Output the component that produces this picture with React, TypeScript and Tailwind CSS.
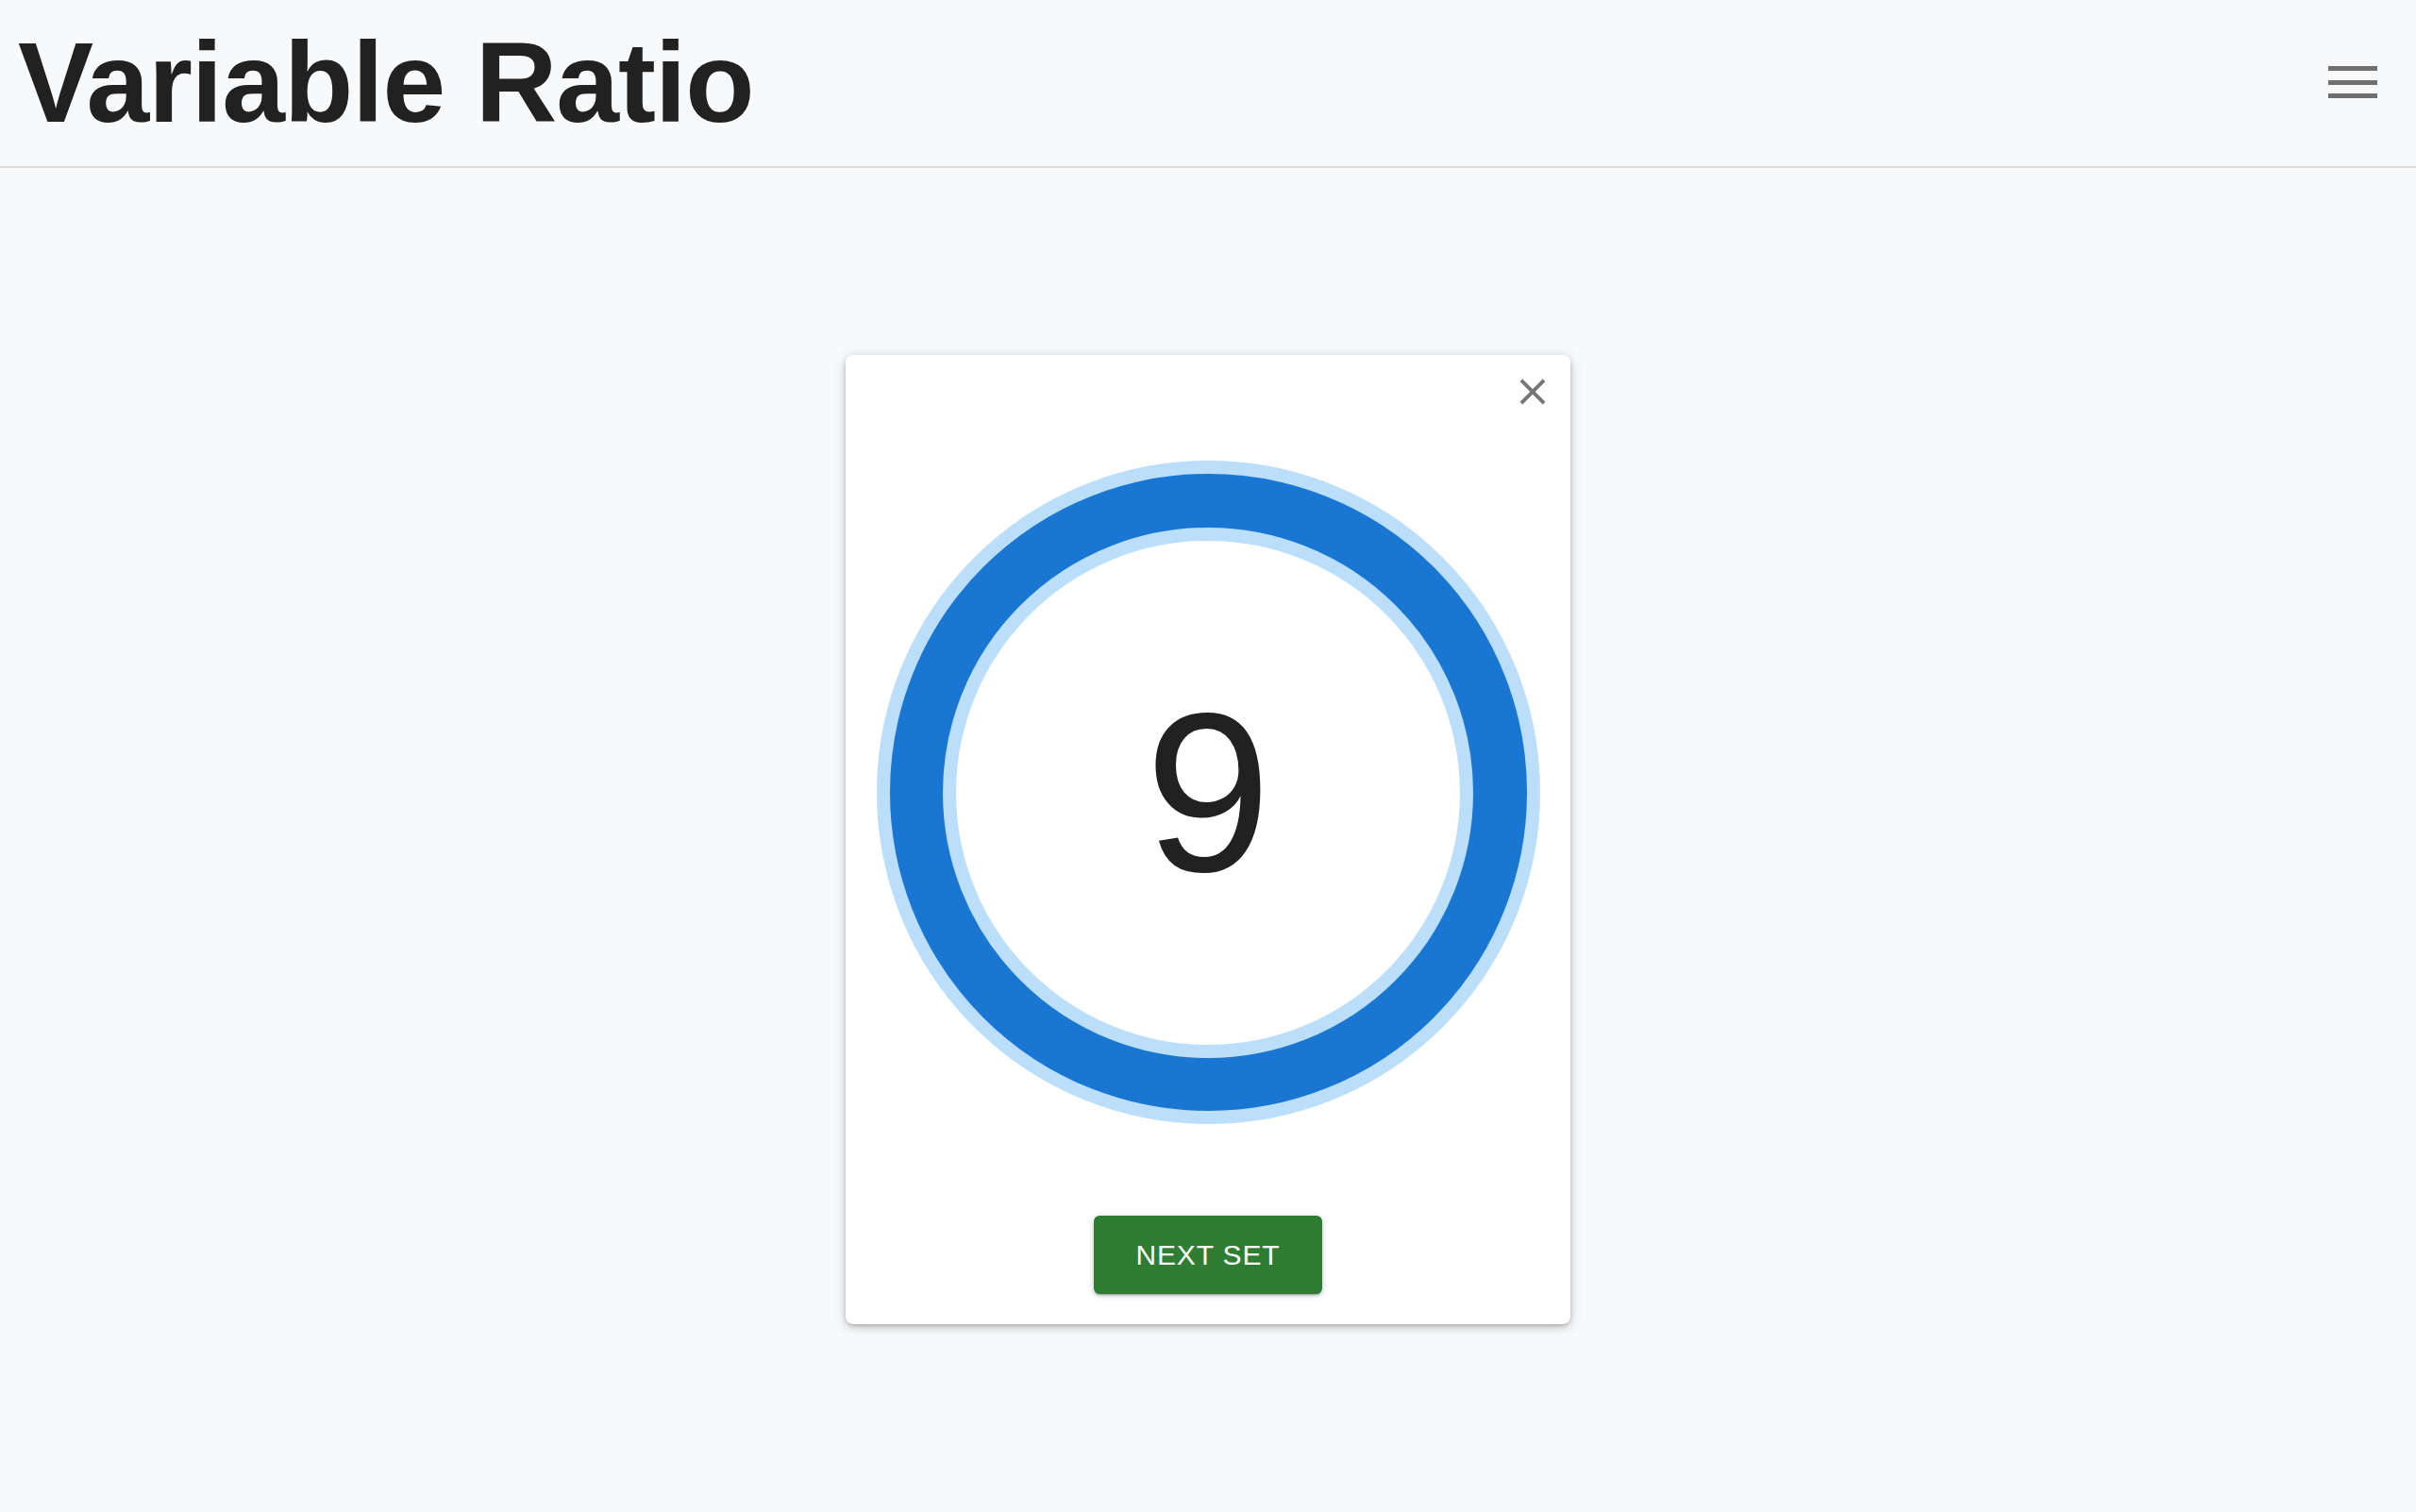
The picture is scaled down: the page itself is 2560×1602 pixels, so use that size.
import { useState } from "react";

function CloseIcon() {
  return (
    <svg viewBox="0 0 24 24" className="h-[46px] w-[46px]" fill="#757575">
      <path d="M19 6.41 17.59 5 12 10.59 6.41 5 5 6.41 10.59 12 5 17.59 6.41 19 12 13.41 17.59 19 19 17.59 13.41 12z" />
    </svg>
  );
}

function CountRing({ value }: { value: number }) {
  return (
    <div className="flex h-[703px] w-[703px] items-center justify-center rounded-full border-[14px] border-[#bbdefb] bg-[#1976d2]">
      <div className="flex h-[562px] w-[562px] items-center justify-center rounded-full border-[14px] border-[#bbdefb] bg-white">
        <span className="text-[240px] font-normal leading-none text-[#212121]">
          {value}
        </span>
      </div>
    </div>
  );
}

export default function App() {
  const [count, setCount] = useState(9);
  const [open, setOpen] = useState(true);

  return (
    <div className="min-h-screen bg-[#f8f9fa] font-['Liberation_Sans',Arial,sans-serif]">
      <header className="flex h-[178px] items-center justify-between border-b-2 border-[#dcdcdc] pb-[2px] pl-[19px] pr-[41px]">
        <h1 className="text-[120px] font-bold leading-none tracking-[-1px] text-[#212121]">
          Variable Ratio
        </h1>
        <button className="flex w-[52px] flex-col gap-[9.5px]">
          <span className="h-[5px] w-full bg-[#6f6f6f]" />
          <span className="h-[5px] w-full bg-[#6f6f6f]" />
          <span className="h-[5px] w-full bg-[#6f6f6f]" />
        </button>
      </header>

      {open && (
        <main className="flex justify-center pt-[198px]">
          <section className="relative flex w-[768px] flex-col items-center rounded-[8px] bg-white pb-[32px] pt-[112px] shadow-[0_2px_4px_-1px_rgba(0,0,0,0.2),0_4px_10px_0_rgba(0,0,0,0.14),0_1px_14px_0_rgba(0,0,0,0.1)]">
            <button
              className="absolute right-[17px] top-[16px]"
              onClick={() => setOpen(false)}
            >
              <CloseIcon />
            </button>
            <CountRing value={count} />
            <button
              className="mt-[97px] flex h-[83px] w-[242px] items-center justify-center rounded-[6px] bg-[#2e7d32] text-[30px] tracking-[0.02857em] text-white shadow-[0_3px_2px_-2px_rgba(0,0,0,0.25),0_2px_4px_0_rgba(0,0,0,0.14),0_1px_8px_0_rgba(0,0,0,0.12)]"
              onClick={() => setCount(Math.floor(Math.random() * 12) + 1)}
            >
              NEXT SET
            </button>
          </section>
        </main>
      )}
    </div>
  );
}
